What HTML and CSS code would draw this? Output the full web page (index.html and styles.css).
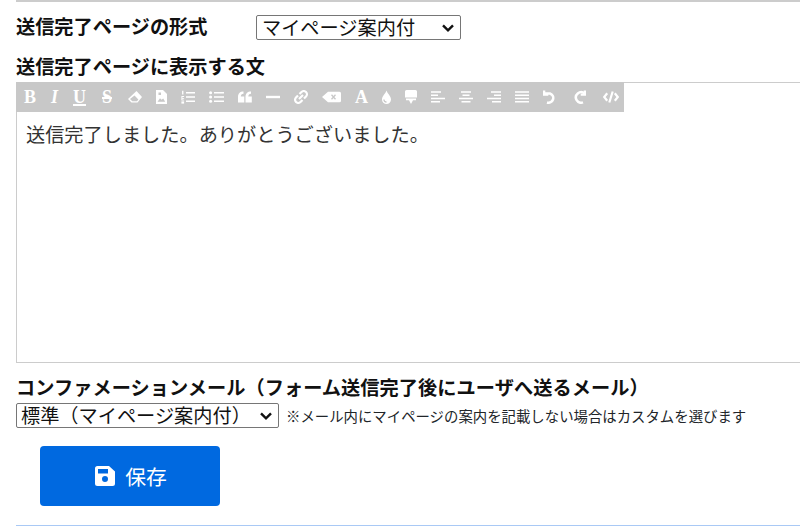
FILE: index.html
```html
<!DOCTYPE html>
<html lang="ja">
<head>
<meta charset="utf-8">
<title>送信完了ページ</title>
<link rel="stylesheet" href="styles.css">
</head>
<body>
<main class="page">
  <div class="form-row">
    <label class="label label-inline">送信完了ページの形式</label>
    <div class="select-box select-page">
      <select class="select"><option>マイページ案内付</option></select>
      <svg class="chevron" viewBox="0 0 12 8"><path d="M1 1.300 6 6.300l5-5"/></svg>
    </div>
  </div>
  <div class="label label-block">送信完了ページに表示する文</div>
  <div class="editor">
    <div class="toolbar">
      <span class="tool tool-b">B</span>
      <span class="tool tool-i">I</span>
      <span class="tool tool-u">U</span>
      <span class="tool tool-s">S</span>
      <svg class="icon" width="14" height="14" viewBox="0 0 14 14"><path d="M8.500 1 14 7 9.500 12.500H3.500L0 9z"/><path class="cut" d="M2 9 4.300 11.200H9L10.400 9.500 6.500 5.600z"/></svg>
      <svg class="icon" width="11" height="14" viewBox="0 0 11 14"><path d="M0 0h7l4 4v10H0z"/><path class="cut" d="M2.500 2.500h2.500V5H2.500zM1.500 11.800 4 8.300l1.500 1.500 1.700-1.300 2 3.300z"/></svg>
      <svg class="icon" width="14" height="14" viewBox="0 0 14 14"><path d="M5 2h9v1.500H5zM5 6.200h9v1.500H5zM5 10.500h9V12H5zM1.100 .8h1.300v3.700H1.100zM.4 6h2.700v.9H1.400v1h1.700v.8H1.400v1h1.700v.9H.4z"/><path d="M.4 11.400h2.700v2.200H.4z"/></svg>
      <svg class="icon" width="15" height="14" viewBox="0 0 15 14"><path d="M5 2h10v1.500H5zM5 6.200h10v1.500H5zM5 10.500h10V12H5z"/><circle cx="1.600" cy="2.700" r="1.500"/><circle cx="1.600" cy="7" r="1.500"/><circle cx="1.600" cy="11.300" r="1.500"/></svg>
      <svg class="icon" width="14" height="14" viewBox="0 0 14 14"><path d="M0 12.500V7C0 3.500 2 1.500 5.500 1.500v2.300C3.800 3.800 2.800 5 2.800 6.500H6.300v6zM7.500 12.500V7c0-3.500 2-5.500 5.500-5.500v2.300c-1.700 0-2.700 1.200-2.700 2.700H13.800v6z"/></svg>
      <svg class="icon" width="14" height="14" viewBox="0 0 14 14"><path d="M0 5.800h14v2.400H0z"/></svg>
      <svg class="icon" width="14" height="14" viewBox="0 0 14 14"><path class="line" d="M5 9 9 5M5.500 4 7.500 2a3 3 0 0 1 4.500 4.500L10 8.500M8.500 10 6.500 12A3 3 0 0 1 2 7.500L4 5.500"/></svg>
      <svg class="icon" width="19" height="14" viewBox="0 0 19 14"><path d="M6 1.800h11.500A1.500 1.500 0 0 1 19 3.300v7.400a1.500 1.500 0 0 1-1.500 1.500H6L0 7z"/><path class="line line-cut" d="M9.500 4.800 13.500 9.200M13.500 4.800 9.500 9.200"/></svg>
      <span class="tool tool-a">A</span>
      <svg class="icon" width="9" height="14" viewBox="0 0 9 14"><path d="M4.500 .5C5.300 3.500 9 6 9 9.500a4.500 4.500 0 0 1-9 0C0 6 3.700 3.500 4.500 .5z"/><path class="line line-cut" d="M1.900 9.500A2.600 2.600 0 0 0 4.500 12"/></svg>
      <svg class="icon" width="12" height="14" viewBox="0 0 12 14"><path d="M1.500 0h9A1.500 1.500 0 0 1 12 1.500V7.500H0V1.500A1.500 1.500 0 0 1 1.500 0zM1 8.500h10v1.700H8L6 14 4 10.200H1z"/></svg>
      <svg class="icon" width="14" height="14" viewBox="0 0 14 14"><path d="M0 1.200h10v1.500H0zM0 4.500h7v1.500H0zM0 7.800h14v1.500H0zM0 11.100h9v1.500H0z"/></svg>
      <svg class="icon" width="14" height="14" viewBox="0 0 14 14"><path d="M2 1.200h10v1.500H2zM3.500 4.500h7v1.500h-7zM0 7.800h14v1.500H0zM2.500 11.100h9v1.500h-9z"/></svg>
      <svg class="icon" width="14" height="14" viewBox="0 0 14 14"><path d="M4 1.200h10v1.500H4zM7 4.500h7v1.500H7zM0 7.800h14v1.500H0zM5 11.100h9v1.500H5z"/></svg>
      <svg class="icon" width="14" height="14" viewBox="0 0 14 14"><path d="M0 1.200h14v1.500H0zM0 4.500h14v1.500H0zM0 7.800h14v1.500H0zM0 11.100h14v1.500H0z"/></svg>
      <svg class="icon icon-turn" width="13" height="14" viewBox="0 0 13 14"><path class="line" d="M2 3.500H7A4.500 4.500 0 1 1 4 12.500"/><path d="M0 .5h2.300v5.300H0zM0 3.500h5.300v2.300H0z"/></svg>
      <svg class="icon icon-turn icon-redo" width="12" height="14" viewBox="0 0 12 14"><path class="line" d="M10.500 3.500A5.200 5.200 0 1 0 9 12.300"/><path d="M9.700 .5H12v5.300H9.700zM6.700 3.500H12v2.300H6.700z"/></svg>
      <svg class="icon icon-code" width="16" height="14" viewBox="0 0 16 14"><path class="line" d="M4.200 3.300 1.200 7l3 3.700M11.800 3.300l3 3.700-3 3.700M9.700 1.500 6.300 12.500"/></svg>
    </div>
    <div class="editor-body">送信完了しました。ありがとうございました。</div>
  </div>
  <div class="label label-mail">コンファメーションメール（フォーム送信完了後にユーザへ送るメール）</div>
  <div class="mail-row">
    <div class="select-box select-mail">
      <select class="select"><option>標準（マイページ案内付）</option></select>
      <svg class="chevron" viewBox="0 0 12 8"><path d="M1 1.300 6 6.300l5-5"/></svg>
    </div>
    <span class="note">※メール内にマイページの案内を記載しない場合はカスタムを選びます</span>
  </div>
  <button class="save" type="button">
    <svg class="save-icon" viewBox="0 0 20 20"><path fill-rule="evenodd" d="M2.500 0H14l6 5.500V17.500A2.500 2.500 0 0 1 17.500 20h-15A2.500 2.500 0 0 1 0 17.500v-15A2.500 2.500 0 0 1 2.500 0zM3 3v4.500h10V3zM10 10a3 3 0 1 0 0 6 3 3 0 0 0 0-6z"/></svg>
    <span>保存</span>
  </button>
</main>
</body>
</html>
```

FILE: styles.css
```css
* { box-sizing: border-box; }

html, body {
  margin: 0;
  height: 526px;
  overflow: hidden;
  background: #fff;
}

body {
  font-family: "Noto Sans CJK JP", "Liberation Sans", sans-serif;
  color: #212529;
}

.page {
  margin-left: 16px;
  height: 526px;
  border-top: 2px solid #ccc;
  border-bottom: 1px solid #a9c9f5;
  overflow: hidden;
}

.form-row {
  display: flex;
  align-items: center;
  height: 25px;
  margin-top: 13px;
}

.label {
  font-size: 19.2px;
  font-weight: 700;
  line-height: 25px;
  color: #111;
}

.label-inline { width: 240px; margin-top: -2px; }
.label-block { margin-top: 14px; }
.label-mail { margin-top: 12px; letter-spacing: 0.06px; }

.select-box {
  position: relative;
  height: 25px;
  border: 1px solid #767676;
  border-radius: 2px;
  background: #fff;
  overflow: hidden;
}

.select {
  display: block;
  appearance: none;
  width: 100%;
  height: 28px;
  margin-top: -3px;
  padding: 0 0 0 4px;
  border: 0;
  background: transparent;
  font-family: inherit;
  font-size: 19.2px;
  color: #111;
}

.chevron {
  position: absolute;
  right: 6px;
  top: 8px;
  width: 12px;
  height: 8px;
  fill: none;
  stroke: #111;
  stroke-width: 2.400;
  pointer-events: none;
}

.select-page { width: 205px; }
.select-page .select { padding-left: 5px; }
.select-mail { width: 263px; }

.editor {
  height: 281px;
  margin-top: 3px;
  border: 1px solid #ccc;
  border-right: 0;
}

.toolbar {
  display: flex;
  align-items: center;
  gap: 14px;
  width: 608px;
  height: 30px;
  margin: -1px 0 0 -1px;
  padding-left: 8px;
  background: #c8c8c8;
}

.icon {
  flex: none;
  fill: #fff;
}

.icon .cut { fill: #c8c8c8; }

.icon .line {
  fill: none;
  stroke: #fff;
  stroke-width: 2.200;
}

.icon .line-cut {
  stroke: #c8c8c8;
  stroke-width: 1.300;
}

.icon-turn .line { stroke-width: 2.500; }
.icon-redo { margin-left: 4px; }
.icon-code { margin-left: 3px; }

.tool {
  flex: none;
  text-align: center;
  color: #fff;
  font: 700 18px/14px "Liberation Serif", serif;
}

.tool-b { width: 12px; }
.tool-i { width: 9px; font-style: italic; }
.tool-u { width: 13px; text-decoration: underline; text-underline-offset: 1px; text-decoration-thickness: 2px; }
.tool-s { width: 14px; text-decoration: line-through; text-decoration-thickness: 2px; }
.tool-a { width: 13px; }

.editor-body {
  padding: 10px 9px;
  font-size: 19.2px;
  line-height: 25px;
  color: #333;
}

.mail-row {
  display: flex;
  align-items: center;
  gap: 7px;
  height: 25px;
  margin-top: 3px;
}

.note {
  font-size: 14.4px;
  line-height: 20px;
  color: #212529;
}

.save {
  display: flex;
  align-items: center;
  justify-content: center;
  gap: 10px;
  width: 180px;
  height: 60px;
  margin: 18px 0 0 24px;
  padding: 0 0 0 4px;
  border: 0;
  border-radius: 4px;
  background: #0069e0;
  color: #fff;
  font-family: inherit;
  font-size: 20.8px;
}

.save-icon {
  width: 20px;
  height: 20px;
  fill: #fff;
  margin-left: -2px;
}
```
